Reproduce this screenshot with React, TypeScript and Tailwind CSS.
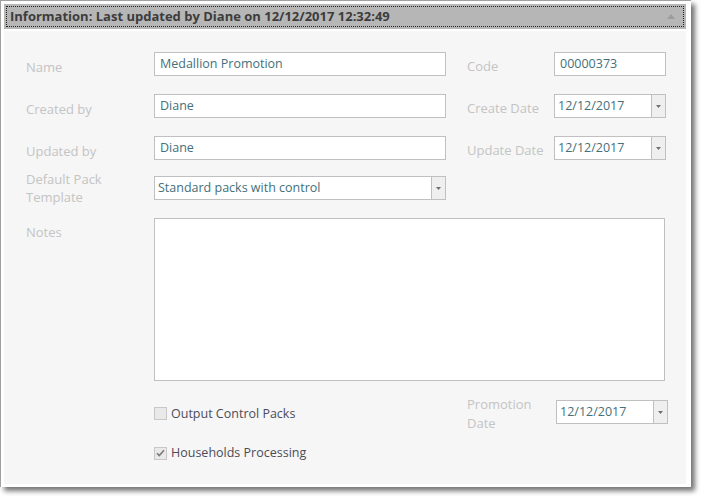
import { ReactNode } from 'react'

const font = { fontFamily: '"Open Sans", "Noto Sans", sans-serif' }

function Label({ children, className = '' }: { children: ReactNode; className?: string }) {
  return <div className={`text-[13px] leading-[18px] text-[#c4c4c4] shrink-0 ${className}`}>{children}</div>
}

function TextBox({ value, className = '' }: { value: string; className?: string }) {
  return (
    <div className={`h-[24px] border border-[#c0c0c0] bg-white pl-[5px] pt-[1px] flex items-center text-[12.5px] text-[#44707a] shrink-0 ${className}`}>
      {value}
    </div>
  )
}

function DropBox({ value, className = '' }: { value: string; className?: string }) {
  return (
    <div className={`h-[24px] border border-[#c0c0c0] bg-white flex text-[12.5px] text-[#44707a] shrink-0 ${className}`}>
      <div className="flex-1 pl-[3px] pt-[1px] flex items-center">{value}</div>
      <div className="w-[14px] border-l border-[#c0c0c0] bg-[#efefef] flex items-center justify-center">
        <svg width="5" height="3" viewBox="0 0 5 3">
          <path d="M0 0h5L2.5 3z" fill="#707070" />
        </svg>
      </div>
    </div>
  )
}

function Check({ checked, label }: { checked?: boolean; label: string }) {
  return (
    <div className="flex items-center gap-[4px]">
      <div className="w-[13px] h-[13px] border border-[#c8c8c8] bg-[#e9e9e9] flex items-center justify-center">
        {checked && (
          <svg width="9" height="8" viewBox="0 0 9 8">
            <path d="M1 4.2l2.3 2.3L8 1.3" stroke="#7a7a7a" strokeWidth="1.6" fill="none" />
          </svg>
        )}
      </div>
      <span className="text-[12.5px] leading-[18px] text-[#4c4c58]">{label}</span>
    </div>
  )
}

export default function App() {
  return (
    <div className="w-[701px] h-[496px] bg-white" style={font}>
      <div className="w-[691px] h-[487px] bg-white border-l border-t border-[#a0a0a0] p-[3px] pr-[5px] pb-[3px] flex flex-col gap-[2px] shadow-[4px_4px_5px_rgba(0,0,0,0.55)]">
        {/* ── Header bar ── */}
        <div className="h-[25px] bg-[#b6b6b6] p-[2px] shrink-0">
          <div className="h-full border border-dotted border-[#222] flex items-center justify-between pl-[3px] pr-[8px]">
            <span className="text-[13px] font-bold text-[#3c3c3c]">
              Information: Last updated by Diane on 12/12/2017 12:32:49
            </span>
            <svg width="8" height="5" viewBox="0 0 8 5">
              <path d="M0 5h8L4 0z" fill="#9c9c9c" />
            </svg>
          </div>
        </div>

        {/* ── Form body ── */}
        <div className="flex-1 bg-[#f6f6f6] pl-[22px] pt-[21px] flex flex-col">
          <div className="flex h-[24px]">
            <Label className="w-[128px] pt-[6px]">Name</Label>
            <TextBox value="Medallion Promotion" className="w-[292px]" />
            <Label className="w-[87px] ml-[21px] pt-[5px]">Code</Label>
            <TextBox value="00000373" className="w-[112px]" />
          </div>
          <div className="flex h-[24px] mt-[18px]">
            <Label className="w-[128px] pt-[6px]">Created by</Label>
            <TextBox value="Diane" className="w-[292px]" />
            <Label className="w-[87px] ml-[21px] pt-[5px]">Create Date</Label>
            <DropBox value="12/12/2017" className="w-[112px]" />
          </div>
          <div className="flex h-[24px] mt-[18px]">
            <Label className="w-[128px] pt-[6px]">Updated by</Label>
            <TextBox value="Diane" className="w-[292px]" />
            <Label className="w-[87px] ml-[21px] pt-[5px]">Update Date</Label>
            <DropBox value="12/12/2017" className="w-[112px]" />
          </div>
          <div className="flex items-center h-[24px] mt-[16px]">
            <Label className="w-[128px]">
              Default Pack
              <br />
              Template
            </Label>
            <DropBox value="Standard packs with control" className="w-[292px]" />
          </div>
          <div className="flex mt-[18px]">
            <Label className="w-[128px] pt-[5px]">Notes</Label>
            <div className="w-[511px] h-[163px] border border-[#c0c0c0] bg-white" />
          </div>
          <div className="flex items-center h-[24px] mt-[19px]">
            <div className="w-[128px] shrink-0" />
            <div className="w-[313px] pt-[3px] shrink-0">
              <Check label="Output Control Packs" />
            </div>
            <Label className="w-[89px] leading-[19px] mt-[4px]">
              Promotion
              <br />
              Date
            </Label>
            <DropBox value="12/12/2017" className="w-[112px]" />
          </div>
          <div className="flex items-center h-[18px] mt-[20px]">
            <div className="w-[128px] shrink-0" />
            <Check checked label="Households Processing" />
          </div>
        </div>
      </div>
    </div>
  )
}
